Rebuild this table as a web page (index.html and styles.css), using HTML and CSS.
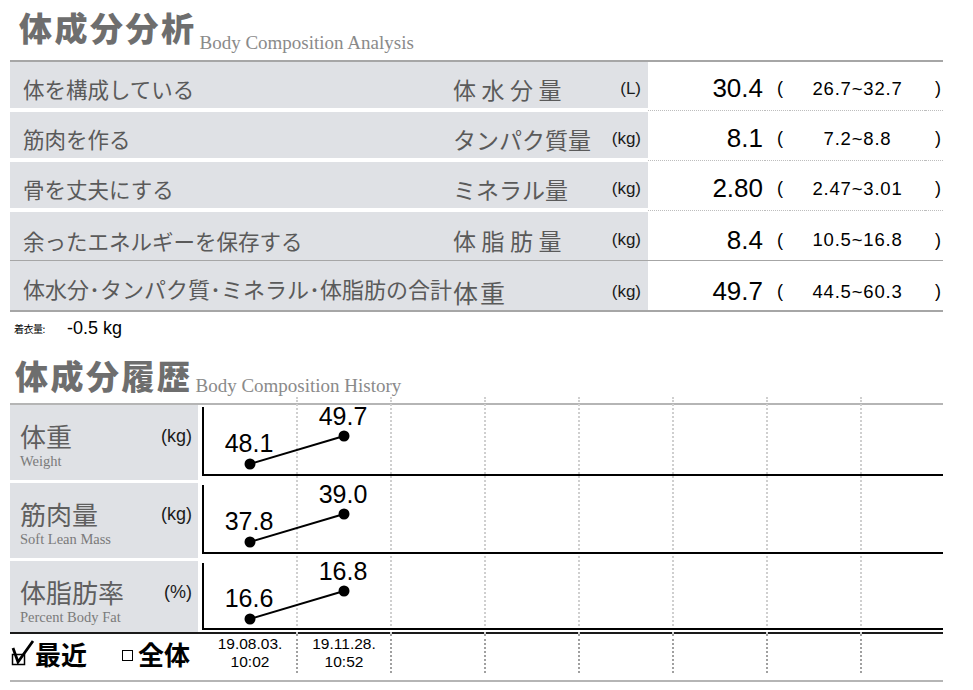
FILE: index.html
```html
<!DOCTYPE html>
<html lang="ja">
<head>
<meta charset="utf-8">
<title>体成分分析</title>
<link rel="stylesheet" href="styles.css">
</head>
<body>
<div class="page">
  <div class="title t1"><span class="jp">体成分分析</span><span class="en">Body Composition Analysis</span></div>

  <div class="comp">
    <div class="row">
      <div class="g lbl">体を構成している</div>
      <div class="g name sp">体水分量</div>
      <div class="g unit">(L)</div>
      <div class="w val">30.4</div>
      <div class="w po">(</div>
      <div class="w rng">26.7~32.7</div>
      <div class="w pc">)</div>
    </div>
    <div class="row">
      <div class="g lbl">筋肉を作る</div>
      <div class="g name">タンパク質量</div>
      <div class="g unit">(kg)</div>
      <div class="w val">8.1</div>
      <div class="w po">(</div>
      <div class="w rng">7.2~8.8</div>
      <div class="w pc">)</div>
    </div>
    <div class="row">
      <div class="g lbl">骨を丈夫にする</div>
      <div class="g name">ミネラル量</div>
      <div class="g unit">(kg)</div>
      <div class="w val">2.80</div>
      <div class="w po">(</div>
      <div class="w rng">2.47~3.01</div>
      <div class="w pc">)</div>
    </div>
    <div class="row r4">
      <div class="g lbl">余ったエネルギーを保存する</div>
      <div class="g name sp">体脂肪量</div>
      <div class="g unit">(kg)</div>
      <div class="w val">8.4</div>
      <div class="w po">(</div>
      <div class="w rng">10.5~16.8</div>
      <div class="w pc">)</div>
    </div>
    <div class="row r5">
      <div class="g lbl long">体水分･タンパク質･ミネラル･体脂肪の合計</div>
      <div class="g name big">体重</div>
      <div class="g unit">(kg)</div>
      <div class="w val">49.7</div>
      <div class="w po">(</div>
      <div class="w rng">44.5~60.3</div>
      <div class="w pc">)</div>
    </div>
  </div>

  <div class="clothes"><span class="cl-lbl">着衣量:</span><span class="cl-val">-0.5 kg</span></div>

  <div class="title t2"><span class="jp">体成分履歴</span><span class="en">Body Composition History</span></div>

  <div class="hist">
    <div class="grid-over"><i></i><i></i><i></i><i></i><i></i><i></i><i></i></div>

    <div class="hrow">
      <div class="hlabel">
        <div class="hl-top"><span class="hjp">体重</span><span class="hunit">(kg)</span></div>
        <div class="hen">Weight</div>
      </div>
      <svg class="chart" width="741" height="71">
        <line x1="1" y1="2" x2="1" y2="71" stroke="#000" stroke-width="2"/>
        <line x1="0" y1="70" x2="741" y2="70" stroke="#000" stroke-width="2"/>
        <line x1="48" y1="59" x2="142" y2="31" stroke="#000" stroke-width="2"/>
        <circle cx="48" cy="59" r="5.5"/>
        <circle cx="142" cy="31" r="5.5"/>
        <text class="pt" x="47" y="47" text-anchor="middle">48.1</text>
        <text class="pt" x="141" y="20" text-anchor="middle">49.7</text>
      </svg>
    </div>

    <div class="hrow">
      <div class="hlabel">
        <div class="hl-top"><span class="hjp">筋肉量</span><span class="hunit">(kg)</span></div>
        <div class="hen">Soft Lean Mass</div>
      </div>
      <svg class="chart" width="741" height="71">
        <line x1="1" y1="2" x2="1" y2="71" stroke="#000" stroke-width="2"/>
        <line x1="0" y1="70" x2="741" y2="70" stroke="#000" stroke-width="2"/>
        <line x1="48" y1="59" x2="142" y2="31" stroke="#000" stroke-width="2"/>
        <circle cx="48" cy="59" r="5.5"/>
        <circle cx="142" cy="31" r="5.5"/>
        <text class="pt" x="47" y="47" text-anchor="middle">37.8</text>
        <text class="pt" x="141" y="20" text-anchor="middle">39.0</text>
      </svg>
    </div>

    <div class="hrow last">
      <div class="hlabel">
        <div class="hl-top"><span class="hjp">体脂肪率</span><span class="hunit">(%)</span></div>
        <div class="hen">Percent Body Fat</div>
      </div>
      <svg class="chart" width="741" height="69">
        <line x1="1" y1="2" x2="1" y2="69" stroke="#000" stroke-width="2"/>
        <line x1="0" y1="68" x2="741" y2="68" stroke="#000" stroke-width="2"/>
        <line x1="48" y1="58" x2="142" y2="30" stroke="#000" stroke-width="2"/>
        <circle cx="48" cy="58" r="5.5"/>
        <circle cx="142" cy="30" r="5.5"/>
        <text class="pt" x="47" y="46" text-anchor="middle">16.6</text>
        <text class="pt" x="141" y="19" text-anchor="middle">16.8</text>
      </svg>
    </div>
  </div>

  <div class="foot">
    <div class="checks">
      <svg class="cbx" width="24" height="28" viewBox="0 0 24 28">
        <rect x="1.5" y="14.5" width="12" height="10" fill="#fff" stroke="#000" stroke-width="1.5"/>
        <path d="M2 8 L7 22 L22 1" fill="none" stroke="#000" stroke-width="2.8"/>
      </svg>
      <span class="opt">最近</span>
      <span class="box"></span>
      <span class="opt opt2">全体</span>
    </div>
    <div class="dcol">19.08.03.<br>10:02</div>
    <div class="dcol">19.11.28.<br>10:52</div>
    <div class="dcol"></div>
    <div class="dcol"></div>
    <div class="dcol"></div>
    <div class="dcol"></div>
    <div class="dcol"></div>
  </div>
</div>
</body>
</html>
```

FILE: styles.css
```css
body {
  margin: 0;
  background: #fff;
  color: #000;
  font-family: "Noto Sans CJK JP", sans-serif;
}

.page {
  width: 973px;
}

/* section titles */
.title {
  display: flex;
  align-items: flex-end;
  box-sizing: border-box;
  padding-bottom: 8px;
}
.t1 {
  height: 60px;
  padding-left: 19px;
}
.t2 {
  height: 65px;
  padding-left: 15px;
}
.title .jp {
  font-size: 33px;
  line-height: 33px;
  font-weight: 900;
  letter-spacing: 2.5px;
  color: #6e6e6e;
  margin-bottom: 8px;
}
.t2 .jp {
  margin-bottom: 3px;
}
.title .en {
  margin-left: 3px;
  font-family: "Liberation Serif", serif;
  font-size: 19px;
  line-height: 19px;
  color: #8a8a8a;
}

/* composition table */
.comp {
  margin-left: 10px;
  width: 933px;
  border-top: 2px solid #a6a6a6;
  border-bottom: 2px solid #a6a6a6;
}
.row {
  display: grid;
  grid-template-columns: 443px 147px 48px 117px 25px 135px 18px;
  height: 50px;
  align-items: start;
}
.g {
  background: #dfe1e5;
  height: 46px;
  box-sizing: border-box;
  padding-top: 7px;
  display: flex;
  align-items: center;
  color: #5a5a5a;
  white-space: nowrap;
}
.w {
  height: 49px;
  box-sizing: border-box;
  padding-top: 7px;
  padding-bottom: 2px;
  border-bottom: 1px dotted #bdbdbd;
  display: flex;
  align-items: center;
  font-family: "Liberation Sans", Arial, sans-serif;
  color: #000;
}
.r4 {
  height: 48px;
  border-bottom: 1px solid #a6a6a6;
}
.r4 .g,
.r4 .w {
  height: 48px;
  padding-top: 8px;
  padding-bottom: 0;
  border-bottom: none;
}
.r5 {
  height: 49px;
}
.r5 .g,
.r5 .w {
  height: 49px;
  padding-top: 12px;
  padding-bottom: 0;
  border-bottom: none;
}
.r5 .g.lbl {
  padding-top: 4px;
}
.lbl {
  padding-left: 13px;
  font-size: 21.5px;
}
.lbl.long {
  font-size: 22px;
}
.name {
  font-size: 23px;
}
.name.sp {
  letter-spacing: 5.5px;
}
.name.big {
  font-size: 25px;
  letter-spacing: 2px;
}
.unit {
  justify-content: flex-end;
  padding-right: 7px;
  font-family: "Liberation Sans", Arial, sans-serif;
  font-size: 17px;
  color: #1a1a1a;
}
.val {
  justify-content: flex-end;
  padding-right: 2px;
  font-size: 26px;
}
.po {
  padding-left: 12px;
  font-size: 18px;
}
.rng {
  justify-content: center;
  font-size: 18.5px;
  letter-spacing: 0.8px;
}
.pc {
  padding-left: 10px;
  font-size: 18px;
}

/* clothes weight */
.clothes {
  display: flex;
  align-items: center;
  height: 20px;
  margin-top: 6px;
  padding-left: 14px;
}
.cl-lbl {
  width: 53px;
  font-size: 10px;
  letter-spacing: -0.5px;
}
.cl-val {
  font-family: "Liberation Sans", Arial, sans-serif;
  font-size: 18px;
}

/* history */
.hist {
  position: relative;
  margin-left: 10px;
  width: 933px;
  border-top: 2px solid #b5b5b5;
  border-bottom: 2px solid #1a1a1a;
}
.grid-over {
  position: absolute;
  top: -8px;
  left: 194px;
  height: 237px;
  display: flex;
  z-index: 0;
}
.grid-over i {
  flex: none;
  width: 94px;
  box-sizing: border-box;
  border-right: 2px dotted #cfcfcf;
}
.hrow {
  position: relative;
  z-index: 1;
  display: grid;
  grid-template-columns: 188px 741px;
  column-gap: 4px;
  align-items: start;
  height: 78px;
}
.hrow.last {
  height: 71px;
}
.hlabel {
  background: #dfe1e5;
  height: 75px;
  box-sizing: border-box;
  padding: 16px 6px 0 10px;
}
.hrow.last .hlabel {
  height: 71px;
}
.hl-top {
  display: flex;
  justify-content: space-between;
  align-items: center;
  height: 30px;
}
.hjp {
  font-size: 26px;
  line-height: 30px;
  color: #5f5f5f;
}
.hunit {
  font-family: "Liberation Sans", Arial, sans-serif;
  font-size: 18px;
  color: #1a1a1a;
}
.hen {
  margin-top: 1px;
  font-family: "Liberation Serif", serif;
  font-size: 14.5px;
  line-height: 18px;
  color: #7a7a7a;
}
.chart {
  display: block;
  overflow: visible;
}
.pt {
  font-family: "Liberation Sans", Arial, sans-serif;
  font-size: 25px;
  fill: #000;
}

/* footer row */
.foot {
  margin-left: 10px;
  width: 933px;
  height: 46px;
  display: flex;
  align-items: flex-start;
  border-bottom: 2px solid #b5b5b5;
}
.checks {
  flex: none;
  width: 194px;
  height: 39px;
  display: flex;
  align-items: center;
}
.cbx {
  display: block;
  margin-left: 1px;
}
.opt {
  font-size: 26px;
  line-height: 30px;
  font-weight: 700;
  color: #000;
}
.box {
  width: 9px;
  height: 9px;
  border: 1px solid #000;
  margin-left: 35px;
  margin-top: 4px;
}
.opt2 {
  margin-left: 5px;
}
.dcol {
  flex: none;
  width: 94px;
  height: 39px;
  box-sizing: border-box;
  padding-top: 1px;
  border-right: 2px dotted #a0a0a0;
  text-align: center;
  font-family: "Liberation Sans", Arial, sans-serif;
  font-size: 15.5px;
  line-height: 18px;
}
```
